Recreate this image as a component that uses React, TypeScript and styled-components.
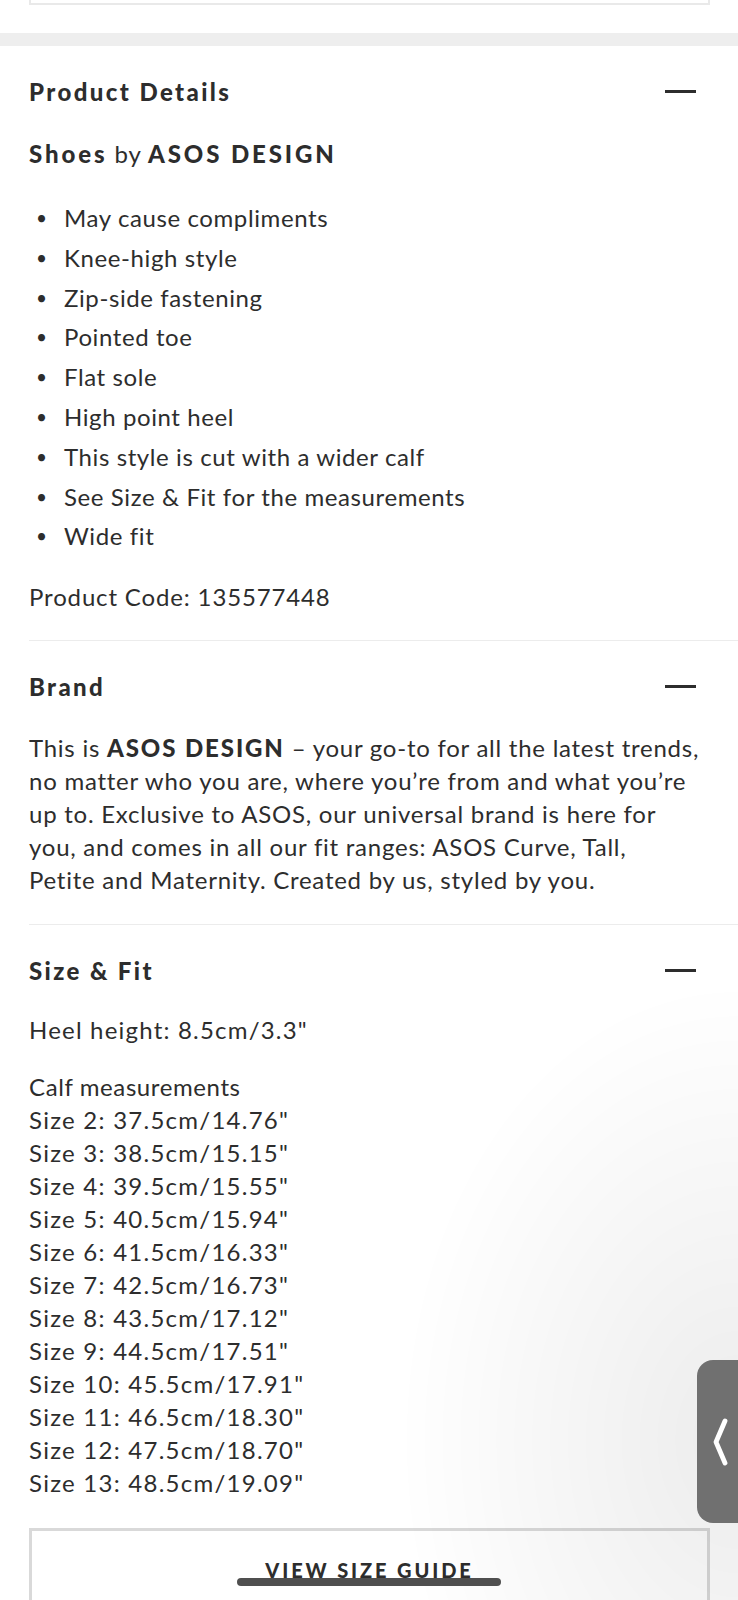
import styled, { createGlobalStyle } from "styled-components"

const GlobalStyle = createGlobalStyle`
  * { box-sizing: border-box; }
  html, body {
    margin: 0;
    padding: 0;
    background: #ffffff;
  }
  body {
    font-family: Lato, "Noto Sans", sans-serif;
    color: #2d2d2d;
    -webkit-font-smoothing: antialiased;
  }
`

const bullets = [
    "May cause compliments",
    "Knee-high style",
    "Zip-side fastening",
    "Pointed toe",
    "Flat sole",
    "High point heel",
    "This style is cut with a wider calf",
    "See Size & Fit for the measurements",
    "Wide fit",
]

const calfSizes = [
    "Size 2: 37.5cm/14.76\"",
    "Size 3: 38.5cm/15.15\"",
    "Size 4: 39.5cm/15.55\"",
    "Size 5: 40.5cm/15.94\"",
    "Size 6: 41.5cm/16.33\"",
    "Size 7: 42.5cm/16.73\"",
    "Size 8: 43.5cm/17.12\"",
    "Size 9: 44.5cm/17.51\"",
    "Size 10: 45.5cm/17.91\"",
    "Size 11: 46.5cm/18.30\"",
    "Size 12: 47.5cm/18.70\"",
    "Size 13: 48.5cm/19.09\"",
]

type AccordionProps = {
    title: string
    children: React.ReactNode
}

const Accordion: React.FC<AccordionProps> = (props) => {
    return (
        <Section>
            <SectionHeader>
                <SectionTitle>{props.title}</SectionTitle>
                <CollapseIcon aria-label="collapse" />
            </SectionHeader>
            {props.children}
        </Section>
    )
}

export default function App() {
    return (
        <Page>
            <GlobalStyle />
            <TopCard />
            <Band />
            <Accordion title="Product Details">
                <SubTitle><b>Shoes</b> by <b>ASOS DESIGN</b></SubTitle>
                <BulletList>
                    {bullets.map(item => (
                        <BulletItem key={item}>
                            <Bullet>•</Bullet>
                            <span>{item}</span>
                        </BulletItem>
                    ))}
                </BulletList>
                <Text $gap={27.5} $spacing={0.85}>Product Code: 135577448</Text>
            </Accordion>
            <Accordion title="Brand">
                <BrandText>
                    This is <b>ASOS DESIGN</b> – your go-to for all the latest trends,<br />
                    no matter who you are, where you’re from and what you’re<br />
                    up to. Exclusive to ASOS, our universal brand is here for<br />
                    you, and comes in all our fit ranges: ASOS Curve, Tall,<br />
                    Petite and Maternity. Created by us, styled by you.
                </BrandText>
            </Accordion>
            <Accordion title="Size & Fit">
                <Text $gap={26} $spacing={1.2}>Heel height: 8.5cm/3.3"</Text>
                <Measurements>
                    <Line $spacing={0.6}>Calf measurements</Line>
                    {calfSizes.map(size => <Line key={size} $spacing={1.25}>{size}</Line>)}
                </Measurements>
                <SizeGuideButton>VIEW SIZE GUIDE</SizeGuideButton>
            </Accordion>
            <Shade />
            <SideTab>
                <svg width="20" height="50" viewBox="0 0 20 50" fill="none">
                    <path d="M15 4 L6 25 L15 46" stroke="#ffffff" strokeWidth="4.8" strokeLinecap="round" strokeLinejoin="round" />
                </svg>
            </SideTab>
            <HomeIndicator />
        </Page>
    )
}

const Page = styled.div`
    position: relative;
    width: 738px;
    min-height: 1600px;
    overflow: hidden;
    font-size: 24px;
    line-height: 33px;
    letter-spacing: 0.6px;
`

const TopCard = styled.div`
    height: 5px;
    margin: 0 28px 0 29px;
    border: 2px solid #e9e9e9;
    border-top: none;
`

const Band = styled.div`
    height: 13px;
    margin-top: 28px;
    background-color: #eeeeee;
`

const Section = styled.section`
    margin-left: 29px;
    padding: 29px 28px 27.5px 0;
    border-bottom: 1px solid #ececec;
    &:last-of-type {
        border-bottom: none;
    }
`

const SectionHeader = styled.div`
    display: flex;
    align-items: center;
    justify-content: space-between;
    padding-right: 14px;
`

const SectionTitle = styled.h2`
    margin: 0;
    font-size: 24px;
    line-height: 33px;
    font-weight: 900;
    letter-spacing: 2.4px;
`

const CollapseIcon = styled.span`
    display: block;
    width: 31px;
    height: 3px;
    background-color: #2d2d2d;
`

const SubTitle = styled.p`
    margin: 29px 0 0;
    letter-spacing: 0.8px;
    b {
        font-weight: 900;
        letter-spacing: 2.9px;
    }
`

const BulletList = styled.ul`
    margin: 31px 0 0;
    padding: 0;
    list-style: none;
`

const BulletItem = styled.li`
    display: flex;
    align-items: center;
    & + & {
        margin-top: 6.8px;
    }
`

const Bullet = styled.span`
    width: 35px;
    flex-shrink: 0;
    padding-left: 7px;
    font-size: 19px;
`

const Text = styled.p<{ $gap: number; $spacing: number }>`
    margin: ${props => props.$gap}px 0 0;
    letter-spacing: ${props => props.$spacing}px;
`

const BrandText = styled.p`
    margin: 28px 0 0;
    white-space: nowrap;
    letter-spacing: 0.75px;
    b {
        font-weight: 900;
        letter-spacing: 1.9px;
    }
`

const Measurements = styled.div`
    margin-top: 24px;
`

const Line = styled.div<{ $spacing: number }>`
    line-height: 33px;
    letter-spacing: ${props => props.$spacing}px;
`

const SizeGuideButton = styled.button`
    display: flex;
    align-items: center;
    justify-content: center;
    width: 100%;
    height: 84px;
    margin-top: 29px;
    padding: 0;
    background: transparent;
    border: 3px solid #d9d9d9;
    font-family: Lato, "Noto Sans", sans-serif;
    font-size: 20px;
    font-weight: 900;
    letter-spacing: 2.9px;
    color: #2d2d2d;
    text-decoration: underline;
    text-underline-offset: 3px;
`

const Shade = styled.div`
    position: fixed;
    inset: 0;
    pointer-events: none;
    background: radial-gradient(ellipse 340px 460px at 738px 1440px, rgba(0, 0, 0, 0.075), rgba(0, 0, 0, 0) 100%);
`

const SideTab = styled.div`
    position: fixed;
    right: 0;
    top: 1360px;
    width: 41px;
    height: 163px;
    display: flex;
    align-items: center;
    justify-content: center;
    padding-left: 4px;
    background-color: #707070;
    border-radius: 16px 0 0 16px;
`

const HomeIndicator = styled.div`
    position: fixed;
    left: 50%;
    bottom: 14px;
    width: 264px;
    height: 8px;
    transform: translateX(-50%);
    border-radius: 4px;
    background-color: #4f4f4f;
`
